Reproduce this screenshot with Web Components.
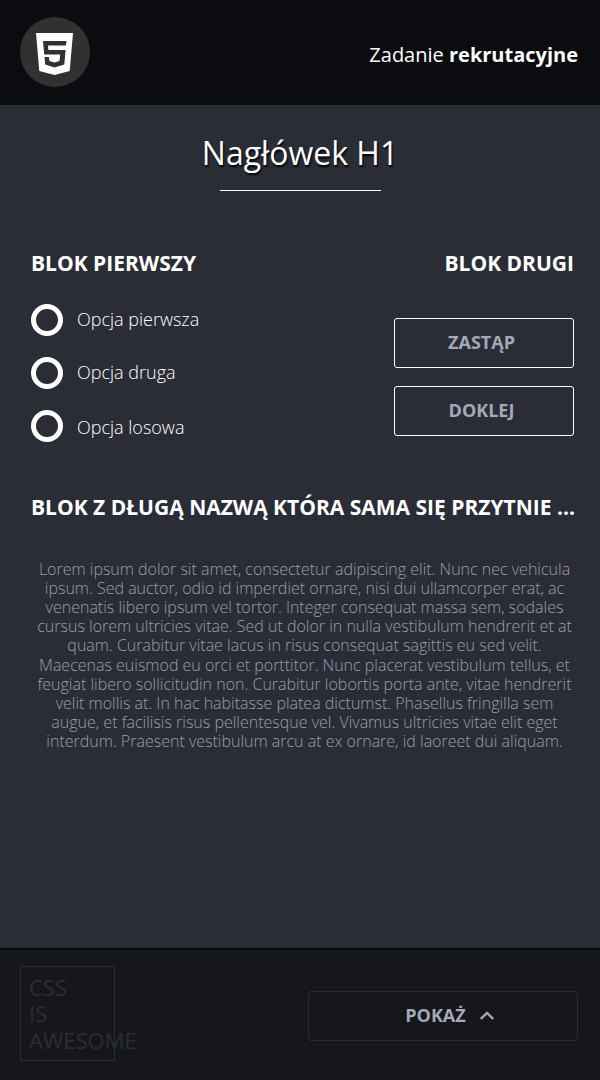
<!DOCTYPE html>
<html lang="pl"><head><meta charset="utf-8"><title>Zadanie rekrutacyjne</title>
<style>html,body{margin:0;height:100%;background:#2b2d36;font-family:"Open Sans","Noto Sans",sans-serif}</style></head>
<body><task-page></task-page>
<script>
const define=(name,html)=>customElements.define(name,class extends HTMLElement{constructor(){super();this.attachShadow({mode:'open'}).innerHTML=html}});
define('site-header',`<style>:host{display:flex;box-sizing:border-box;height:105px;padding:17px 22px 18px 20px;background:#0b0c10;color:#fff;justify-content:space-between;align-items:center}
.logo{display:flex;width:70px;height:70px;border-radius:50%;background:#313131;align-items:center;justify-content:center}svg{display:block;margin:3px 0 0 -1px}
p{margin:5px 0 0;font-size:20px;line-height:27px}b{font-weight:700}</style>
<div class="logo"><svg width="37" height="42" viewBox="0 0 37 42"><path fill="#fff" d="M0 0H37L33.700 38L18.500 42L3.300 38Z"/><path fill="#313131" d="M7 8H30.500L30 12.500H12L12.400 17H29.600L28.300 31.500L18.500 34.500L9.200 31.500L8.500 24H13L13.400 28L18.500 29.500L23.500 28L24.200 21.500H8.200Z"/></svg></div><p><slot></slot></p>`);
define('page-title',`<style>:host{display:flex;flex-direction:column;align-items:center;color:#fff}h1{margin:0;font-size:32px;line-height:44px;font-weight:400;text-shadow:1px 2px 2px #000}i{width:161px;height:1px;background:#fff;margin-top:15px}</style><h1><slot></slot></h1><i></i>`);
define('block-title',`<style>:host{display:block;color:#fff}h2{margin:0;padding-top:1px;font-size:21px;line-height:27px;font-weight:700;white-space:nowrap;overflow:hidden;text-overflow:ellipsis}</style><h2><slot></slot></h2>`);
define('radio-option',`<style>:host{display:flex;align-items:center;height:32px;gap:14px;color:#fff;font-size:18px;line-height:24px;font-weight:300}i{box-sizing:border-box;width:32px;height:32px;border:5px solid #fff;border-radius:50%}span{padding-top:var(--drop,0);padding-bottom:var(--lift,2px)}</style><i></i><span><slot></slot></span>`);
define('action-button',`<style>:host{display:block;width:180px;height:50px}button{box-sizing:border-box;display:flex;width:100%;height:100%;padding:0 5px 2px 0;align-items:center;justify-content:center;gap:14px;border:1px solid var(--line,#fff);border-radius:3px;background:none;color:#a4a8b7;font:700 18px/24px "Open Sans",sans-serif}:host(.wide) button{padding:0 0 2px 13px}</style><button><slot></slot><slot name="icon"></slot></button>`);
define('site-footer',`<style>:host{display:flex;box-sizing:border-box;height:132px;padding:16px 22px 18px 20px;justify-content:space-between;background:#16171b;border-top:2px solid #08090b}
.css{box-sizing:border-box;width:95px;height:95px;border:1px solid #2b2d33;padding:7px 8px;color:#2b2d36;font-size:22px;line-height:26.4px}action-button{width:270px;margin-top:25px;--line:#2b2d36}</style>
<div class="css">CSS<br>IS<br>AWESOME</div><action-button class="wide">POKAŻ<svg slot="icon" width="14" height="9" viewBox="0 0 14 9"><path d="M.8 8L7 2L13.200 8" fill="none" stroke="#a4a8b7" stroke-width="2.400"/></svg></action-button>`);
define('task-page',`<style>:host{display:flex;flex-direction:column;height:1080px;background:#2b2d36}main{flex:1}page-title{padding-top:26px}
.blocks{display:flex;justify-content:space-between;padding:58px 26px 0 31px}.options{display:grid;gap:21px;margin-top:27px}.options radio-option:last-child{--drop:2px;--lift:0px}.right{text-align:right}.buttons{display:grid;gap:18px;margin-top:41px}.long{margin:51px 24px 0 31px}
p{margin:38.6px 25px 0 34px;text-align:center;color:#9a9eac;font-size:16px;line-height:19.200px;font-weight:300}</style>
<site-header>Zadanie <b>rekrutacyjne</b></site-header><main><page-title>Nagłówek H1</page-title>
<div class="blocks"><section><block-title>BLOK PIERWSZY</block-title><div class="options"><radio-option>Opcja pierwsza</radio-option><radio-option>Opcja druga</radio-option><radio-option>Opcja losowa</radio-option></div></section>
<section class="right"><block-title>BLOK DRUGI</block-title><div class="buttons"><action-button>ZASTĄP</action-button><action-button>DOKLEJ</action-button></div></section></div>
<block-title class="long">BLOK Z DŁUGĄ NAZWĄ KTÓRA SAMA SIĘ PRZYTNIE ...</block-title>
<p>Lorem ipsum dolor sit amet, consectetur adipiscing elit. Nunc nec vehicula<br>ipsum. Sed auctor, odio id imperdiet ornare, nisi dui ullamcorper erat, ac<br>venenatis libero ipsum vel tortor. Integer consequat massa sem, sodales<br>cursus lorem ultricies vitae. Sed ut dolor in nulla vestibulum hendrerit et at<br>quam. Curabitur vitae lacus in risus consequat sagittis eu sed velit.<br>Maecenas euismod eu orci et porttitor. Nunc placerat vestibulum tellus, et<br>feugiat libero sollicitudin non. Curabitur lobortis porta ante, vitae hendrerit<br>velit mollis at. In hac habitasse platea dictumst. Phasellus fringilla sem<br>augue, et facilisis risus pellentesque vel. Vivamus ultricies vitae elit eget<br>interdum. Praesent vestibulum arcu at ex ornare, id laoreet dui aliquam.</p></main><site-footer></site-footer>`);
</script></body></html>
